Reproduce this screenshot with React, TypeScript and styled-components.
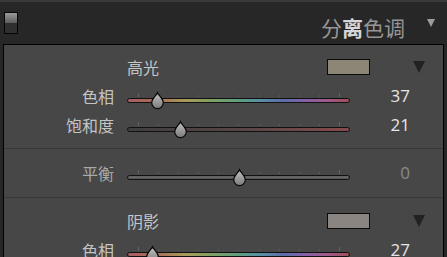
import styled, { createGlobalStyle } from 'styled-components';

const GlobalStyle = createGlobalStyle`
  html, body {
    margin: 0;
    padding: 0;
    overflow: hidden;
    background: #272727;
  }
  body {
    font-family: "Noto Sans CJK SC", "Noto Sans", sans-serif;
  }
`;

const Page = styled.div`
  width: 447px;
  height: 257px;
  overflow: hidden;
  background: #272727;
  border-top: 2px solid #3a3a3a;
  box-sizing: border-box;
`;

const Header = styled.header`
  height: 42px;
  display: flex;
  align-items: center;
  padding: 0 12px 0 4px;
`;

const Toggle = styled.div`
  width: 12px;
  height: 20px;
  border: 1px solid #050505;
  background: linear-gradient(#9a9a9a 0%, #5c5c5c 50%, #2f2f2f 50%, #2f2f2f 100%);
`;

const Title = styled.h1`
  flex: 1;
  margin: 8px 0 0;
  text-align: right;
  font-size: 21px;
  font-weight: 400;
  color: #969696;
`;

const Bright = styled.span`
  color: #d6d6d6;
  font-weight: 700;
`;

const HeaderArrow = styled.span`
  margin-left: 22px;
  width: 0;
  height: 0;
  border-left: 4px solid transparent;
  border-right: 4px solid transparent;
  border-top: 8px solid #9c9c9c;
`;

const Panel = styled.section`
  margin-left: 3px;
  width: 441px;
  box-sizing: border-box;
  border: 1px solid #000;
  border-bottom: none;
  background: #474747;
`;

const Group = styled.div<{ $top: number; $bottom: number; $last?: boolean }>`
  padding: ${(p) => p.$top}px 0 ${(p) => p.$bottom}px;
  border-bottom: ${(p) => (p.$last ? 'none' : '1px solid #383838')};
`;

const SectionHead = styled.div`
  height: 29px;
  display: flex;
  align-items: center;
  padding: 0 18px 0 123px;
`;

const SectionTitle = styled.span`
  flex: 1;
  font-size: 16px;
  color: #c6c6c6;
`;

const Swatch = styled.div<{ $color: string }>`
  width: 41px;
  height: 14px;
  border: 1px solid #0a0a0a;
  background: ${(p) => p.$color};
`;

const SectionArrow = styled.span`
  margin-left: 43px;
  width: 0;
  height: 0;
  border-left: 6px solid transparent;
  border-right: 6px solid transparent;
  border-top: 12px solid #222;
`;

const Row = styled.div`
  height: 29px;
  display: grid;
  grid-template-columns: 110px 223px 73px;
  align-items: center;
  padding-right: 20px;
`;

const Label = styled.span<{ $dim?: boolean }>`
  text-align: right;
  font-size: 16px;
  color: ${(p) => (p.$dim ? '#a9a9a9' : '#c4c4c4')};
`;

const SliderBox = styled.div`
  position: relative;
  margin-left: 13px;
  width: 223px;
  height: 10px;
  display: flex;
  flex-direction: column;
  margin-top: 5px;
`;

const Ticks = styled.div`
  height: 4px;
  margin-bottom: 1px;
  padding: 0 10px 0 11px;
  display: flex;
  justify-content: space-between;
  align-items: flex-end;
`;

const Tick = styled.span<{ $end?: boolean }>`
  width: 1px;
  height: ${(p) => (p.$end ? 4 : 2)}px;
  background: ${(p) => (p.$end ? '#626262' : '#575757')};
`;

const Track = styled.div<{ $fill: string }>`
  height: 5px;
  box-sizing: border-box;
  border: 1px solid #111;
  border-radius: 3px;
  background: ${(p) => p.$fill};
`;

const Thumb = styled.svg`
  position: absolute;
  top: -1px;
  width: 13px;
  height: 17px;
  overflow: visible;
`;

const Value = styled.span<{ $dim?: boolean }>`
  text-align: right;
  font-family: "Open Sans", "Liberation Sans", sans-serif;
  font-size: 17px;
  color: ${(p) => (p.$dim ? '#8a8a8a' : '#e6e6e6')};
`;

const HUE =
  'linear-gradient(90deg, #a85e62 0%, #a86a58 12%, #a89a5a 26%, #7ea062 38%, #5e9e80 50%, #5a8ea4 60%, #5a6eaa 70%, #8460a8 80%, #a05a8a 90%, #9a5058 100%)';
const SAT = 'linear-gradient(90deg, #3e3e3e 0%, #5a4646 55%, #874a4c 100%)';
const BAL = 'linear-gradient(180deg, #5a5a5a 0%, #6c6c6c 40%, #4e4e4e 100%)';

type SliderRow = { label: string; value: string; pos: number; fill: string; dim?: boolean };

function Slider({ pos, fill }: { pos: number; fill: string }) {
  return (
    <SliderBox>
      <Ticks>
        {Array.from({ length: 11 }).map((_, i) => (
          <Tick key={i} $end={i === 0 || i === 10} />
        ))}
      </Ticks>
      <Track $fill={fill} />
      <Thumb viewBox="0 0 13 17" style={{ left: pos - 6.5 }}>
        <defs>
          <linearGradient id="thumbFill" x1="0" y1="0" x2="0" y2="1">
            <stop offset="0" stopColor="#c4c4c4" />
            <stop offset="1" stopColor="#7a7a7a" />
          </linearGradient>
        </defs>
        <path
          d="M6.5 0.7 C7.6 3.4 12.3 6.8 12.3 10.8 A5.8 5.8 0 0 1 0.7 10.8 C0.7 6.8 5.4 3.4 6.5 0.7 Z"
          fill="url(#thumbFill)"
          stroke="#0a0a0a"
          strokeWidth="1.3"
        />
      </Thumb>
    </SliderBox>
  );
}

function Rows({ rows }: { rows: SliderRow[] }) {
  return (
    <>
      {rows.map((r) => (
        <Row key={r.label}>
          <Label $dim={r.dim}>{r.label}</Label>
          <Slider pos={r.pos} fill={r.fill} />
          <Value $dim={r.dim}>{r.value}</Value>
        </Row>
      ))}
    </>
  );
}

const highlights: SliderRow[] = [
  { label: '色相', value: '37', pos: 30.5, fill: HUE },
  { label: '饱和度', value: '21', pos: 53, fill: SAT },
];

const shadows: SliderRow[] = [{ label: '色相', value: '27', pos: 25.5, fill: HUE }];

export default function App() {
  return (
    <Page>
      <GlobalStyle />
      <Header>
        <Toggle />
        <Title>
          分<Bright>离</Bright>色调
        </Title>
        <HeaderArrow />
      </Header>
      <Panel>
        <Group $top={7} $bottom={9}>
          <SectionHead>
            <SectionTitle>高光</SectionTitle>
            <Swatch $color="#8c8676" />
            <SectionArrow />
          </SectionHead>
          <Rows rows={highlights} />
        </Group>
        <Group $top={9} $bottom={10}>
          <Rows rows={[{ label: '平衡', value: '0', pos: 112, fill: BAL, dim: true }]} />
        </Group>
        <Group $top={8} $bottom={0} $last>
          <SectionHead>
            <SectionTitle>阴影</SectionTitle>
            <Swatch $color="#8a8580" />
            <SectionArrow />
          </SectionHead>
          <Rows rows={shadows} />
        </Group>
      </Panel>
    </Page>
  );
}
